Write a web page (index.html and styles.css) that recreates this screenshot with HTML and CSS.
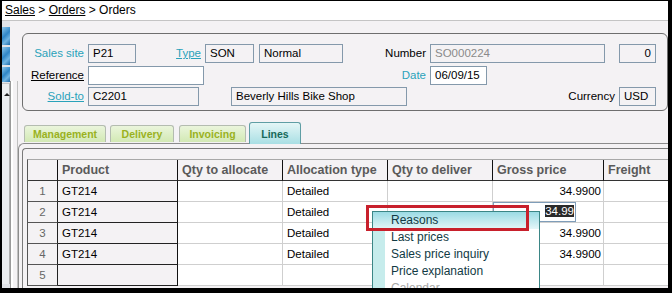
FILE: index.html
```html
<!DOCTYPE html>
<html lang="en">
<head>
    <meta charset="UTF-8">
    <title>Sales order - Lines</title>
    <link rel="stylesheet" href="styles.css">
</head>
<body>
    <div class="screen">
        <div class="crumbs"><u>Sales</u> &gt; <u>Orders</u> &gt; Orders</div>

        <div class="work">
            <!-- Left navigation strip -->
            <div class="side">
                <div class="side-icon"></div>
                <div class="side-icon"></div>
                <div class="side-icon short"></div>
                <div class="side-scroll"><span class="arrow"></span></div>
            </div>
            <div class="rail"></div>

            <div class="main">
                <!-- Order header -->
                <div class="head-box">
                    <div class="row">
                        <span class="lbl w-first link">Sales site</span>
                        <span class="fld w48">P21</span>
                        <span class="lbl w64 link under">Type</span>
                        <span class="fld w49">SON</span>
                        <span class="fld ml5 w84">Normal</span>
                        <span class="lbl w83">Number</span>
                        <span class="fld w175 dim">SO000224</span>
                        <span class="fld ml14 w37 num">0</span>
                    </div>
                    <div class="row r2">
                        <span class="lbl w-first under">Reference</span>
                        <span class="fld w116 edit"></span>
                        <span class="lbl w221 link">Date</span>
                        <span class="fld w57 edit">06/09/15</span>
                    </div>
                    <div class="row r3">
                        <span class="lbl w-first link under">Sold-to</span>
                        <span class="fld w111">C2201</span>
                        <span class="fld ml32 w176">Beverly Hills Bike Shop</span>
                        <span class="lbl w209">Currency</span>
                        <span class="fld w37">USD</span>
                    </div>
                </div>

                <!-- Tabs -->
                <div class="tabs">
                    <div class="tab t-man">Management</div>
                    <div class="tab t-del">Delivery</div>
                    <div class="tab t-inv">Invoicing</div>
                    <div class="tab active">Lines</div>
                </div>

                <div class="tab-panel">
                    <div class="grid-box">
                        <div class="grid">
                            <div class="gr head">
                                <div class="c n"></div>
                                <div class="c p">Product</div>
                                <div class="c">Qty to allocate</div>
                                <div class="c">Allocation type</div>
                                <div class="c">Qty to deliver</div>
                                <div class="c">Gross price</div>
                                <div class="c">Freight</div>
                            </div>
                            <div class="gr">
                                <div class="c n">1</div>
                                <div class="c p">GT214</div>
                                <div class="c"></div>
                                <div class="c">Detailed</div>
                                <div class="c"></div>
                                <div class="c r">34.9900</div>
                                <div class="c"></div>
                            </div>
                            <div class="gr">
                                <div class="c n">2</div>
                                <div class="c p">GT214</div>
                                <div class="c"></div>
                                <div class="c">Detailed</div>
                                <div class="c"></div>
                                <div class="c ed"><span class="edit-box"><span class="sel">34.99</span></span></div>
                                <div class="c"></div>
                            </div>
                            <div class="gr">
                                <div class="c n">3</div>
                                <div class="c p">GT214</div>
                                <div class="c"></div>
                                <div class="c">Detailed</div>
                                <div class="c"></div>
                                <div class="c r">34.9900</div>
                                <div class="c"></div>
                            </div>
                            <div class="gr">
                                <div class="c n">4</div>
                                <div class="c p">GT214</div>
                                <div class="c"></div>
                                <div class="c">Detailed</div>
                                <div class="c"></div>
                                <div class="c r">34.9900</div>
                                <div class="c"></div>
                            </div>
                            <div class="gr">
                                <div class="c n">5</div>
                                <div class="c p"></div>
                                <div class="c"></div>
                                <div class="c"></div>
                                <div class="c"></div>
                                <div class="c"></div>
                                <div class="c"></div>
                            </div>
                        </div>
                    </div>
                </div>
            </div>
        </div>

        <!-- Right-click menu on the price cell -->
        <div class="ctx-menu">
            <div class="ctx-item hot">Reasons</div>
            <div class="ctx-item">Last prices</div>
            <div class="ctx-item">Sales price inquiry</div>
            <div class="ctx-item">Price explanation</div>
            <div class="ctx-item off">Calendar</div>
        </div>
        <div class="callout"></div>
    </div>
</body>
</html>
```

FILE: styles.css
```css
body {
    margin: 0;
    background-color: #000;
    font-family: "Liberation Sans", Arial, sans-serif;
    font-size: 11.5px;
    color: #000;
    overflow: hidden;
}
.screen {
    position: relative;
    margin: 1px 4px 0 2px;
    height: 287px;
    background-color: #f4f2f4;
    display: flex;
    flex-direction: column;
    overflow: hidden;
}
.crumbs {
    height: 19px;
    line-height: 18px;
    padding-left: 3px;
    background-color: #fff;
    border-bottom: 1px solid #c4c4c4;
    font-size: 12px;
}
.work {
    flex: 1;
    display: flex;
    min-height: 0;
}
/* Left strip */
.side {
    width: 8px;
    padding-top: 6px;
    background-color: #e2e4e8;
}
.side-icon {
    height: 18px;
    margin-bottom: 2px;
    background: linear-gradient(135deg, #8fc8ec 0%, #2f86c6 45%, #6fb4e2 70%, #1d6aa8 100%);
}
.side-icon.short {
    height: 15px;
    margin-bottom: 1px;
}
.side-scroll {
    height: 200px;
    background-color: #eceef0;
    border-right: 1px solid #b0b0b0;
    border-top: 1px solid #c8c8c8;
    position: relative;
}
.arrow {
    position: absolute;
    left: 2px;
    top: 9px;
    border-left: 3px solid transparent;
    border-right: 3px solid transparent;
    border-bottom: 3px solid #222;
}
.rail {
    width: 6px;
    margin-top: 60px;
    border-left: 1px solid #9a9a9a;
    border-right: 1px solid #c0c0c0;
    background: linear-gradient(90deg, #fff 0 2px, #f4f2f4 2px);
}
.main {
    flex: 1;
    min-width: 0;
    overflow: hidden;
}
/* Header block */
.head-box {
    box-sizing: border-box;
    height: 78px;
    margin: 12px 0 0 4px;
    padding-top: 10px;
    border: 1px solid #6e6e6e;
    border-radius: 6px;
}
.row {
    display: flex;
    height: 19px;
    align-items: center;
}
.row.r2 {
    margin-top: 3px;
}
.row.r3 {
    margin-top: 2px;
}
.lbl {
    text-align: right;
    white-space: nowrap;
    line-height: 19px;
    padding-right: 4px;
    box-sizing: border-box;
}
.lbl.link {
    color: #2aa2ba;
}
.lbl.under {
    text-decoration: underline;
}
.w-first { width: 65px; }
.w64 { width: 69px; }
.w83 { width: 87px; }
.w221 { width: 226px; }
.w209 { width: 212px; }
.fld {
    box-sizing: border-box;
    height: 19px;
    line-height: 17px;
    padding-left: 4px;
    border: 1px solid #8499ab;
    background-color: #f4f2f4;
    white-space: nowrap;
    overflow: hidden;
}
.fld.edit {
    background-color: #fff;
}
.fld.dim {
    color: #8a8a8a;
}
.fld.num {
    text-align: right;
    padding-right: 4px;
}
.ml5 { margin-left: 5px; }
.ml14 { margin-left: 14px; }
.ml32 { margin-left: 32px; }
.w37 { width: 37px; }
.w48 { width: 48px; }
.w49 { width: 49px; }
.w57 { width: 57px; }
.w84 { width: 84px; }
.w111 { width: 111px; }
.w116 { width: 116px; }
.w175 { width: 175px; }
.w176 { width: 176px; }
/* Tabs */
.tabs {
    display: flex;
    align-items: flex-end;
    height: 21px;
    margin-top: 11px;
    padding-left: 6px;
}
.tab {
    box-sizing: border-box;
    height: 17px;
    margin-bottom: 1px;
    border: 1px solid #b4bcb0;
    border-bottom: none;
    border-radius: 3px 3px 0 0;
    background: linear-gradient(#eaf5dc, #d2e9b4);
    color: #9ab21e;
    font-weight: bold;
    font-size: 10.5px;
    line-height: 16px;
    text-align: center;
}
.t-man { width: 82px; }
.t-del { width: 64px; margin-left: 4px; }
.t-inv { width: 67px; margin-left: 5px; }
.tab.active {
    position: relative;
    z-index: 1;
    width: 52px;
    height: 22px;
    margin-left: 3px;
    margin-bottom: -1px;
    line-height: 22px;
    border-color: #5f9ea4;
    background: linear-gradient(#e4f6f6, #a9dfe4);
    color: #17695a;
}
.tab-panel {
    height: 200px;
    padding: 4px 0 0 3px;
    border-top: 1px solid #8c8c8c;
    border-left: 1px solid #8c8c8c;
    border-top-left-radius: 6px;
}
.grid-box {
    height: 200px;
    padding: 10px 0 0 4px;
    border-top: 1px solid #7a7a7a;
    border-left: 1px solid #7a7a7a;
    border-top-left-radius: 4px;
}
/* Lines grid */
.grid {
    width: 700px;
    border-left: 1px solid #555;
    border-top: 1px solid #a8a8a8;
}
.gr {
    display: grid;
    grid-template-columns: 30px 120px 105px 105px 105px 111px 124px;
    height: 21px;
}
.c {
    box-sizing: border-box;
    height: 21px;
    padding: 0 4px;
    line-height: 20px;
    border-right: 1px solid #cfcfcf;
    border-bottom: 1px solid #cfcfcf;
    background-color: #fff;
    white-space: nowrap;
    overflow: hidden;
}
.c.n {
    text-align: center;
    color: #666;
    background-color: #f4f2f4;
    border-right-color: #222;
    border-bottom-color: #555;
}
.c.p {
    background-color: #f4f2f4;
    border-right-color: #111;
    border-bottom-color: #222;
}
.c.r {
    text-align: right;
    padding-right: 2px;
}
.head .c {
    background-color: #f4f2f4;
    color: #5a5a5a;
    font-weight: bold;
    font-size: 12.5px;
    border-right-color: #111;
    border-bottom-color: #333;
}
.c.ed {
    padding: 0;
}
.edit-box {
    display: block;
    box-sizing: border-box;
    width: 83px;
    height: 20px;
    border: 1px solid #7f9db9;
    background-color: #fff;
    text-align: right;
    line-height: 17px;
    padding-right: 1px;
}
.sel {
    background-color: #2a2a2a;
    color: #fff;
}
/* Context menu */
.ctx-menu {
    position: absolute;
    left: 370px;
    top: 210px;
    width: 168px;
    height: 90px;
    box-sizing: border-box;
    border: 1px solid #3b8686;
    background: linear-gradient(90deg, #c6ecec 0 12px, #fff 12px);
}
.ctx-item {
    height: 17px;
    line-height: 17px;
    padding-left: 18px;
    color: #113a44;
    font-size: 12px;
}
.ctx-item.hot {
    background: linear-gradient(#9bdbe4, #e4f6f8);
}
.ctx-item.off {
    color: #a8a8a8;
}
.callout {
    position: absolute;
    left: 364px;
    top: 204px;
    width: 163px;
    height: 26px;
    box-sizing: border-box;
    border: 3px solid #c8202c;
}
```
